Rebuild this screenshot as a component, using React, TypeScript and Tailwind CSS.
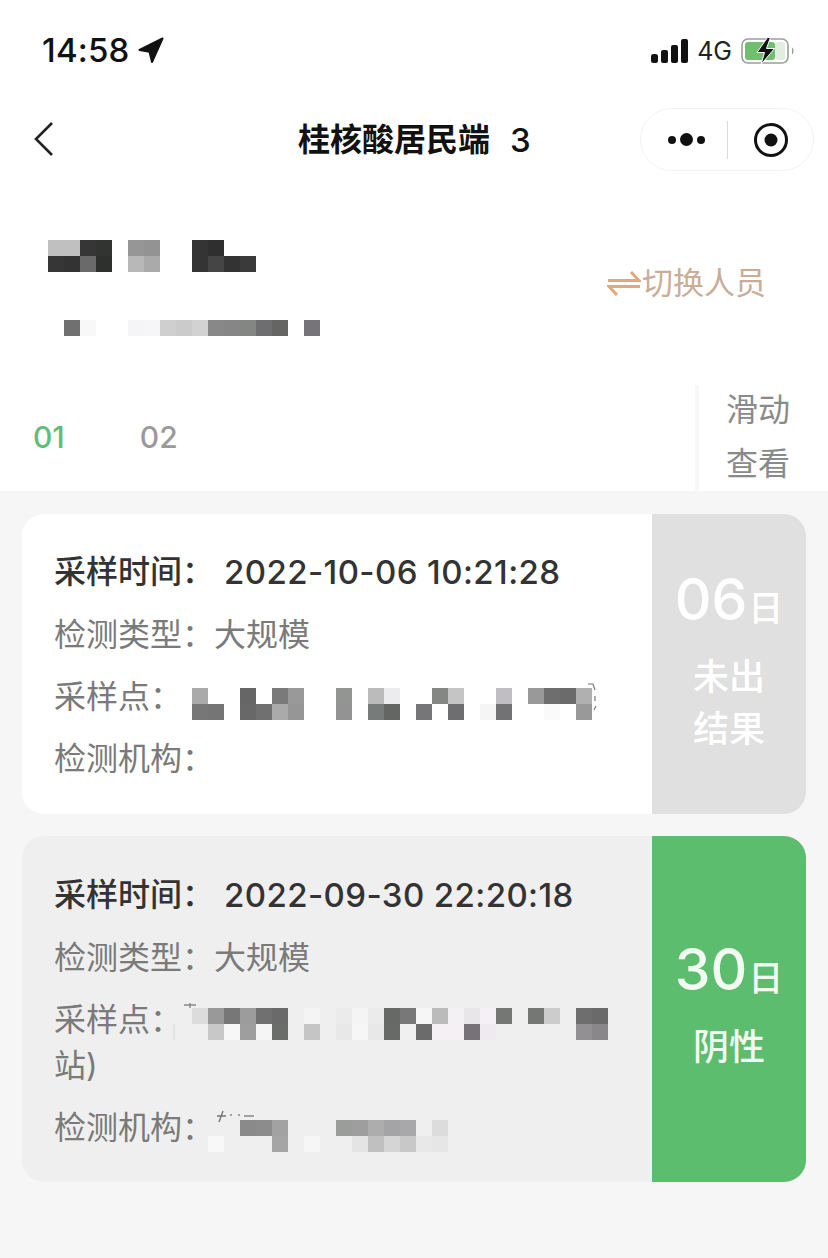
import type { ReactNode } from "react";

const CJK = "font-['Inter','Noto_Sans_CJK_SC',sans-serif]";

type Cell = [number, number, string];

function Mosaic({ width, height, cell = 16, cells, className = "", children }: { width: number; height: number; cell?: number; cells: Cell[]; className?: string; children?: ReactNode }) {
  return (
    <svg width={width} height={height} viewBox={`0 0 ${width} ${height}`} className={`block shrink-0 overflow-visible ${className}`}>
      {cells.map(([c, r, f], i) => (
        <rect key={i} x={c * cell} y={r * cell} width={cell} height={cell} fill={f} />
      ))}
      {children}
    </svg>
  );
}

const name: Cell[] = [
  [0, 0, "#c0c0c0"], [1, 0, "#c0c0c0"], [2, 0, "#363636"], [3, 0, "#323432"],
  [5, 0, "#969696"], [6, 0, "#939393"], [9, 0, "#343434"], [10, 0, "#302f2f"],
  [0, 1, "#363636"], [1, 1, "#333333"], [2, 1, "#6a6a6a"], [3, 1, "#2e302e"],
  [5, 1, "#b8b8b8"], [6, 1, "#aaaaaa"], [9, 1, "#343434"], [10, 1, "#454545"], [11, 1, "#333333"], [12, 1, "#3a3a3a"],
];
const idNo: Cell[] = [
  [0, 0, "#6f706f"], [1, 0, "#f8f8f8"], [4, 0, "#f5f5f8"], [5, 0, "#f6f6f8"], [6, 0, "#cfcfcf"], [7, 0, "#cbcbcb"], [8, 0, "#d2d2d2"],
  [9, 0, "#888888"], [10, 0, "#868686"], [11, 0, "#848684"], [12, 0, "#6e6e70"], [13, 0, "#656563"], [15, 0, "#767479"],
];
const site1: Cell[] = [
  [0, 0, "#aaaaaa"], [3, 0, "#666666"], [5, 0, "#7a7a7a"], [6, 0, "#999999"], [9, 0, "#929592"], [11, 0, "#bbbbbb"], [12, 0, "#ececee"],
  [15, 0, "#858785"], [16, 0, "#c5c5c5"], [19, 0, "#c0bec2"], [21, 0, "#999999"], [22, 0, "#6e6e6e"], [23, 0, "#6b6b6b"], [24, 0, "#b0b0b0"],
  [0, 1, "#777777"], [1, 1, "#747574"], [3, 1, "#686868"], [4, 1, "#707070"], [5, 1, "#aaaaaa"], [6, 1, "#969696"], [9, 1, "#939393"],
  [11, 1, "#777b79"], [12, 1, "#636663"], [14, 1, "#767577"], [16, 1, "#6e6e70"], [18, 1, "#f5f5f5"], [19, 1, "#727274"], [22, 1, "#fafafa"], [24, 1, "#999999"],
];
const site2: Cell[] = [
  [0, 0, "#dcdcdc"], [1, 0, "#999999"], [2, 0, "#777777"], [3, 0, "#9c9c9c"], [4, 0, "#707070"], [5, 0, "#6a6a6a"], [7, 0, "#f4f4f4"],
  [9, 0, "#ebebeb"], [10, 0, "#f4f4f4"], [11, 0, "#ebebeb"], [12, 0, "#666966"], [13, 0, "#787878"], [14, 0, "#f6f6f6"], [15, 0, "#bbbbbb"],
  [16, 0, "#f4f1f4"], [17, 0, "#e8e6e8"], [18, 0, "#f5f0f5"], [19, 0, "#747875"], [21, 0, "#747874"], [22, 0, "#cccccc"], [24, 0, "#6e6e6e"], [25, 0, "#6a6a6a"],
  [1, 1, "#c8c8c8"], [2, 1, "#f7f7f7"], [3, 1, "#9e9e9e"], [4, 1, "#f5f5f5"], [5, 1, "#6a6d6a"], [7, 1, "#c5c5c5"], [9, 1, "#e8e8e8"], [10, 1, "#f6f6f6"],
  [11, 1, "#e8e8e8"], [12, 1, "#676a67"], [13, 1, "#f0f0f0"], [14, 1, "#6b6b6b"], [15, 1, "#f4f0f4"], [16, 1, "#f4f0f4"], [17, 1, "#767277"], [18, 1, "#eeeaef"],
  [24, 1, "#939094"], [25, 1, "#8a878b"],
];
const org2: Cell[] = [
  [3, 0, "#8a8a8a"], [4, 0, "#8c8c8c"], [5, 0, "#a2a2a2"], [9, 0, "#9b9d9b"], [10, 0, "#9e9e9e"], [11, 0, "#adadad"], [12, 0, "#a4a4a6"], [13, 0, "#a8a8aa"], [15, 0, "#dcdcdc"],
  [1, 1, "#f8f8f8"], [5, 1, "#a5a5a5"], [7, 1, "#f6f6f6"], [10, 1, "#e4e4e4"], [11, 1, "#c0c0c0"], [12, 1, "#d5d5d5"], [13, 1, "#c8c8c8"], [14, 1, "#e8e8e8"], [15, 1, "#e6e6e6"],
];

function StatusBar() {
  return (
    <div className="h-[100px] pt-[30px] pl-[42px] pr-[33px] flex items-start justify-between">
      <div className="flex items-center h-[40px] gap-[8px]">
        <span className="text-[33px] leading-[40px] font-medium text-[#111] tracking-[0.2px]">14:58</span>
        <svg width="26" height="26" viewBox="0 0 26 26">
          <path d="M24.5 1.5 1.5 13 11.5 14.8 14 25Z" fill="#111" stroke="#111" strokeWidth="2" strokeLinejoin="round" />
        </svg>
      </div>
      <div className="flex items-center h-[40px] mt-[1px]">
        <svg width="38" height="24" viewBox="0 0 38 24">
          <rect x="0" y="15" width="7" height="9" rx="2.5" fill="#111" />
          <rect x="10" y="11" width="7" height="13" rx="2" fill="#111" />
          <rect x="20" y="6" width="7" height="18" rx="2" fill="#111" />
          <rect x="30" y="0" width="7" height="24" rx="2" fill="#111" />
        </svg>
        <span className="ml-[8px] text-[25px] leading-[40px] text-[#222]">4G</span>
        <svg width="54" height="28" viewBox="0 0 54 28" className="ml-[9px]">
          <rect x="1" y="2" width="46" height="24" rx="6" fill="none" stroke="#9a9f9a" strokeWidth="1.6" />
          <rect x="4" y="5" width="30" height="18" rx="3" fill="#6ec06f" />
          <rect x="34" y="5" width="10" height="18" rx="3" fill="#e2ecdf" />
          <path d="M51 10.5c2 .6 2 6.4 0 7Z" fill="#9a9f9a" />
          <path d="M26.5 0.5 16 15.5h7.5L20 27.5 33.5 11.5H25.5L29.5 0.5Z" fill="#111" stroke="#fff" strokeWidth="1" />
        </svg>
      </div>
    </div>
  );
}

function NavBar() {
  return (
    <div className="h-[72px] mt-[4px] pl-[34px] pr-[14px] flex items-center">
      <svg width="20" height="36" viewBox="0 0 20 36" className="shrink-0 -mt-[2px]">
        <path d="M18 2 2 18l16 16" fill="none" stroke="#222" strokeWidth="2.6" />
      </svg>
      <div className="flex-1 pl-[244px] text-[32px] leading-[40px] font-bold text-[#111] whitespace-nowrap flex items-center">
        <span>桂核酸居民端</span>
        <span className="ml-[20px] text-[33px] font-medium">3</span>
      </div>
      <div className="w-[174px] h-[63px] rounded-full border border-[#f3f3f3] flex items-center shrink-0 -mt-[1px]">
        <div className="w-[86px] pl-[5px] flex items-center justify-center gap-[4px]">
          <span className="w-[8px] h-[8px] rounded-full bg-[#111]" />
          <span className="w-[13px] h-[13px] rounded-full bg-[#111]" />
          <span className="w-[8px] h-[8px] rounded-full bg-[#111]" />
        </div>
        <div className="w-px h-[38px] bg-[#dcdcdc]" />
        <div className="flex-1 flex items-center justify-center">
          <svg width="36" height="36" viewBox="0 0 36 36">
            <circle cx="18" cy="18" r="15.5" fill="none" stroke="#111" strokeWidth="3" />
            <circle cx="18" cy="18" r="6.5" fill="#111" />
          </svg>
        </div>
      </div>
    </div>
  );
}

function UserRow() {
  return (
    <div className="h-[205px] pl-[48px] pr-[62px] flex justify-between">
      <div className="pt-[60px]">
        <Mosaic width={208} height={32} cells={name} />
        <Mosaic width={256} height={16} cells={idNo} className="ml-[16px] mt-[48px]" />
      </div>
      <div className="pt-[83px] flex items-center self-start">
        <svg width="34" height="30" viewBox="0 0 34 30" className="mr-[1px]">
          <path d="M1 12.5h31L24 4M33 18.5H2l8 8.5" fill="none" stroke="#e6a67c" strokeWidth="3" />
        </svg>
        <span className="text-[31px] leading-[40px] text-[#c9ad98]">切换人员</span>
      </div>
    </div>
  );
}

function Tabs() {
  return (
    <div className="h-[106px] flex">
      <div className="flex-1 flex items-start pl-[33px] pt-[32px] gap-[75px] text-[30px] leading-[40px]">
        <span className="text-[#62bd78] font-medium">01</span>
        <span className="text-[#9a9a9a] font-medium">02</span>
      </div>
      <div className="w-[133px] border-l-[4px] border-[#f8f8f8] pl-[27px] text-[32px] leading-[54px] text-[#8a8a8a]">
        <div className="-mt-[2px]">滑动</div>
        <div>查看</div>
      </div>
    </div>
  );
}

function Side({ day, lines, cls }: { day: string; lines: string[]; cls: string }) {
  return (
    <div className={`w-[154px] shrink-0 flex flex-col items-center ${cls}`}>
      <div className="flex items-end h-[66px]">
        <span className="text-[57px] leading-[66px] font-medium">{day}</span>
        <span className="text-[35px] leading-[50px] font-medium ml-[1px]">日</span>
      </div>
      <div className="mt-[18px] text-[36px] leading-[52px] font-medium text-center">
        {lines.map((l) => (
          <div key={l}>{l}</div>
        ))}
      </div>
    </div>
  );
}

function TimeRow({ value }: { value: string }) {
  return (
    <div className="text-[#333] font-medium flex mb-[1px]">
      <span className="shrink-0 w-[170px]">采样时间：</span>
      <span className="text-[33px] tracking-[0.4px]">{value}</span>
    </div>
  );
}

export default function App() {
  return (
    <div className={`w-[828px] h-[1258px] bg-white overflow-hidden ${CJK}`}>
      <StatusBar />
      <NavBar />
      <div className="h-[4px]" />
      <UserRow />
      <Tabs />
      <div className="h-[772px] bg-[#f6f6f6] px-[22px] pt-[23px] flex flex-col gap-[22px]">
        <div className="h-[300px] rounded-[22px] bg-white flex overflow-hidden">
          <div className="flex-1 pl-[32px] pt-[27px] text-[32px] leading-[62px] text-[#7a7a7a]">
            <TimeRow value="2022-10-06 10:21:28" />
            <div>检测类型：大规模</div>
            <div className="flex items-center">
              <span className="shrink-0">采样点：</span>
              <Mosaic width={416} height={32} cells={site1} className="ml-[10px] mt-[14px]">
                <path d="M396 -4h5l2 6M403 8v5M404 18l-2 4" fill="none" stroke="#777" strokeWidth="1.2" />
              </Mosaic>
            </div>
            <div>检测机构：</div>
          </div>
          <Side day="06" lines={["未出", "结果"]} cls="bg-[#e0e0e0] text-white pt-[53px]" />
        </div>
        <div className="h-[346px] rounded-[22px] bg-[#efefef] flex overflow-hidden">
          <div className="flex-1 pl-[32px] pt-[28px] text-[32px] leading-[62px] text-[#7a7a7a]">
            <TimeRow value="2022-09-30 22:20:18" />
            <div>检测类型：大规模</div>
            <div className="flex items-center">
              <span className="shrink-0">采样点：</span>
              <Mosaic width={416} height={32} cells={site2} className="ml-[10px] mt-[8px]">
                <path d="M-8 -3h12M-2 -5v5" fill="none" stroke="#888" strokeWidth="1.4" />
                <path d="M-18 16v16" fill="none" stroke="#dddddd" strokeWidth="1.4" />
              </Mosaic>
            </div>
            <div className="leading-[46px] -mt-[8px]">站)</div>
            <div className="flex items-center mt-[8px]">
              <span className="shrink-0">检测机构：</span>
              <Mosaic width={256} height={32} cells={org2} className="mt-[16px] -ml-[22px]">
                <path d="M25 -4h9M31 -9l-4 11" fill="none" stroke="#777" strokeWidth="1.4" />
                <path d="M38 -5h2M46 -5h2M52 -4h10" fill="none" stroke="#888" strokeWidth="1.4" />
              </Mosaic>
            </div>
          </div>
          <Side day="30" lines={["阴性"]} cls="bg-[#5cbd6e] text-[#f2fbf2] pt-[101px]" />
        </div>
      </div>
    </div>
  );
}
